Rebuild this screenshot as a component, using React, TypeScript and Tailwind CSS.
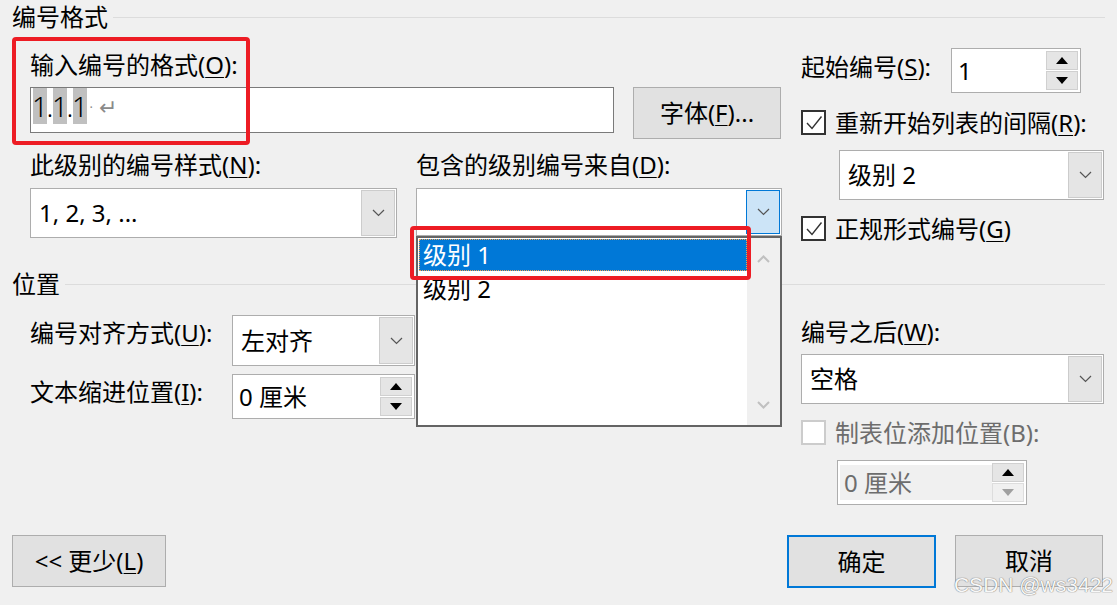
import React from "react";

function Key({ k }: { k: string }) {
  return <span className="underline underline-offset-[3px] decoration-1">{k}</span>;
}

function Chevron({ color = "#555555" }: { color?: string }) {
  return (
    <svg width="13" height="8" viewBox="0 0 13 8">
      <path d="M1 1 L6.5 6.5 L12 1" fill="none" stroke={color} strokeWidth="1.2" />
    </svg>
  );
}

function Tri({ up, color = "#000000" }: { up?: boolean; color?: string }) {
  return (
    <svg width="12" height="7" viewBox="0 0 12 7">
      <path d={up ? "M0 7 L6 0 L12 7 Z" : "M0 0 L12 0 L6 7 Z"} fill={color} />
    </svg>
  );
}

function Check({ checked, disabled }: { checked?: boolean; disabled?: boolean }) {
  return (
    <span
      className={`w-[25px] h-[25px] shrink-0 border-2 bg-white flex items-center justify-center ${
        disabled ? "border-[#cccccc]" : "border-[#333333]"
      }`}
    >
      {checked && (
        <svg width="21" height="21" viewBox="0 0 21 21">
          <path d="M4 11 L9 16.5 L18.5 4.5" fill="none" stroke="#333333" strokeWidth="1.4" />
        </svg>
      )}
    </span>
  );
}

function Select({
  value,
  className,
  hover,
}: {
  value: string;
  className: string;
  hover?: boolean;
}) {
  return (
    <div className={`flex bg-white border border-[#adadad] p-[1px] ${className}`}>
      <div className="flex-1 flex items-center pl-[7px]">{value}</div>
      <div
        className={`w-[34px] border flex items-center justify-center ${
          hover ? "bg-[#cce4f7] border-[#0078d7]" : "bg-[#e5e5e5] border-[#cccccc]"
        }`}
      >
        <Chevron />
      </div>
    </div>
  );
}

function Spin({
  value,
  className,
  disabled,
}: {
  value: string;
  className: string;
  disabled?: boolean;
}) {
  return (
    <div className={`flex bg-white border border-[#adadad] p-[2px] ${className}`}>
      <div
        className={`flex-1 flex items-center pl-[4px] ${
          disabled ? "bg-[#f0f0f0] text-[#6d6d6d] my-[2px]" : ""
        }`}
      >
        {value}
      </div>
      <div className="w-[32px] flex flex-col gap-[1px]">
        <div className="flex-1 bg-[#e5e5e5] border border-[#d0d0d0] flex items-center justify-center">
          <Tri up />
        </div>
        <div
          className={`flex-1 border flex items-center justify-center ${
            disabled ? "bg-[#f0f0f0] border-[#dddddd]" : "bg-[#e5e5e5] border-[#d0d0d0]"
          }`}
        >
          <Tri color={disabled ? "#a0a0a0" : "#000000"} />
        </div>
      </div>
    </div>
  );
}

function Header({ title }: { title: string }) {
  return (
    <div className="flex items-center h-[34px] pl-[12px] pr-[12px]">
      <span>{title}</span>
      <div className="flex-1 h-px bg-[#dcdcdc] ml-[5px]" />
    </div>
  );
}

export default function App() {
  return (
    <div className="w-[1117px] h-[605px] bg-[#f0f0f0] relative overflow-hidden text-[24px] leading-[30px] text-black font-['Noto_Sans','Noto_Sans_CJK_SC',sans-serif]">
      <Header title="编号格式" />

      <div className="flex pl-[30px]">
        {/* left part */}
        <div className="w-[752px]">
          <div className="mt-[16px] h-[30px]">
            输入编号的格式(<Key k="O" />):
          </div>
          <div className="mt-[7px] flex items-start">
            <div className="w-[584px] h-[46px] bg-white border border-[#7a7a7a] flex items-start pl-[2px] text-[28px] leading-[36px] font-light">
              <span className="bg-[#c0c0c0] w-[14px] flex justify-center">1</span>
              <span className="w-[6px] flex justify-center">.</span>
              <span className="bg-[#c0c0c0] w-[14px] flex justify-center">1</span>
              <span className="w-[6px] flex justify-center">.</span>
              <span className="bg-[#c0c0c0] w-[14px] flex justify-center">1</span>
              <span className="text-[#8a8a8a] text-[18px] ml-[2px]">·</span>
              <span className="text-[#8a8a8a] text-[22px] ml-[6px]">↵</span>
            </div>
            <button className="ml-[19px] w-[148px] h-[52px] bg-[#e1e1e1] border border-[#adadad]">
              字体(<Key k="F" />)...
            </button>
          </div>
          <div className="mt-[11px] grid grid-cols-[367px_366px] gap-x-[19px]">
            <div className="h-[30px]">
              此级别的编号样式(<Key k="N" />):
            </div>
            <div className="h-[30px]">
              包含的级别编号来自(<Key k="D" />):
            </div>
            <Select value="1, 2, 3, ..." className="mt-[8px] h-[50px]" />
            <div className="mt-[8px] relative">
              <Select value="" className="h-[48px]" hover />
              <div className="absolute left-0 top-[48px] w-[366px] h-[191px] bg-white border-2 border-[#646464] z-10 flex">
                <div className="flex-1 pt-[1px] pl-[1px]">
                  <div className="h-[32px] bg-[#0078d7] text-white pl-[3px] flex items-center border border-dotted border-[#f7a04a]">
                    级别 1
                  </div>
                  <div className="h-[32px] pl-[4px] flex items-center mt-[2px]">级别 2</div>
                </div>
                <div className="w-[33px] bg-[#f0f0f0] flex flex-col items-center justify-between pt-[17px] pb-[16px]">
                  <svg width="13" height="8" viewBox="0 0 13 8">
                    <path d="M1 7 L6.5 1.5 L12 7" fill="none" stroke="#c0c0c0" strokeWidth="2" />
                  </svg>
                  <svg width="13" height="8" viewBox="0 0 13 8">
                    <path d="M1 1 L6.5 6.5 L12 1" fill="none" stroke="#c0c0c0" strokeWidth="2" />
                  </svg>
                </div>
              </div>
            </div>
          </div>
        </div>

        {/* right part */}
        <div className="ml-[19px] w-[303px]">
          <div className="mt-[14px] flex items-start h-[45px]">
            <span className="w-[150px] mt-[4px]">
              起始编号(<Key k="S" />):
            </span>
            <Spin value="1" className="w-[130px] h-[45px]" />
          </div>
          <div className="mt-[17px] flex items-center gap-[9px] h-[25px]">
            <Check checked />
            <span>
              重新开始列表的间隔(<Key k="R" />):
            </span>
          </div>
          <Select value="级别 2" className="mt-[15px] ml-[38px] w-[265px] h-[50px]" />
          <div className="mt-[16px] flex items-center gap-[9px] h-[25px]">
            <Check checked />
            <span>
              正规形式编号(<Key k="G" />)
            </span>
          </div>
        </div>
      </div>

      <div className="mt-[26px]">
        <Header title="位置" />
      </div>

      <div className="flex pl-[30px]">
        <div className="w-[752px]">
          <div className="mt-[14px] flex items-start">
            <span className="w-[202px] mt-[3px]">
              编号对齐方式(<Key k="U" />):
            </span>
            <Select value="左对齐" className="w-[183px] h-[51px]" />
          </div>
          <div className="mt-[8px] flex items-start">
            <span className="w-[202px] mt-[3px]">
              文本缩进位置(<Key k="I" />):
            </span>
            <Spin value="0 厘米" className="w-[183px] h-[45px]" />
          </div>
        </div>
        <div className="ml-[19px] w-[303px]">
          <div className="mt-[16px] h-[30px]">
            编号之后(<Key k="W" />):
          </div>
          <Select value="空格" className="mt-[7px] w-[303px] h-[50px]" />
          <div className="mt-[16px] flex items-center gap-[9px] h-[25px] text-[#6d6d6d]">
            <Check disabled />
            <span>制表位添加位置(B):</span>
          </div>
          <Spin value="0 厘米" className="mt-[15px] ml-[36px] w-[190px] h-[45px]" disabled />
        </div>
      </div>

      <div className="mt-[30px] flex pl-[12px] pr-[14px]">
        <button className="w-[154px] h-[52px] bg-[#e1e1e1] border border-[#adadad]">
          &lt;&lt; 更少(<Key k="L" />)
        </button>
        <button className="ml-auto w-[149px] h-[53px] bg-[#e1e1e1] border-2 border-[#0078d7]">
          确定
        </button>
        <button className="ml-[19px] w-[148px] h-[52px] bg-[#e1e1e1] border border-[#adadad]">
          取消
        </button>
      </div>

      {/* annotation boxes */}
      <div className="absolute left-[12px] top-[37px] w-[238px] h-[108px] border-[4px] border-[#ed1c24] rounded-[4px] z-20" />
      <div className="absolute left-[410px] top-[226px] w-[341px] h-[54px] border-[4px] border-[#ed1c24] rounded-[4px] z-20" />

      <div className="absolute right-[4px] bottom-[8px] text-[21px] leading-[24px] text-[#f8f8f8] font-['Liberation_Sans',sans-serif] [text-shadow:0_0_1px_#777,0_0_1px_#777] z-30">
        CSDN @ws3422
      </div>
    </div>
  );
}
